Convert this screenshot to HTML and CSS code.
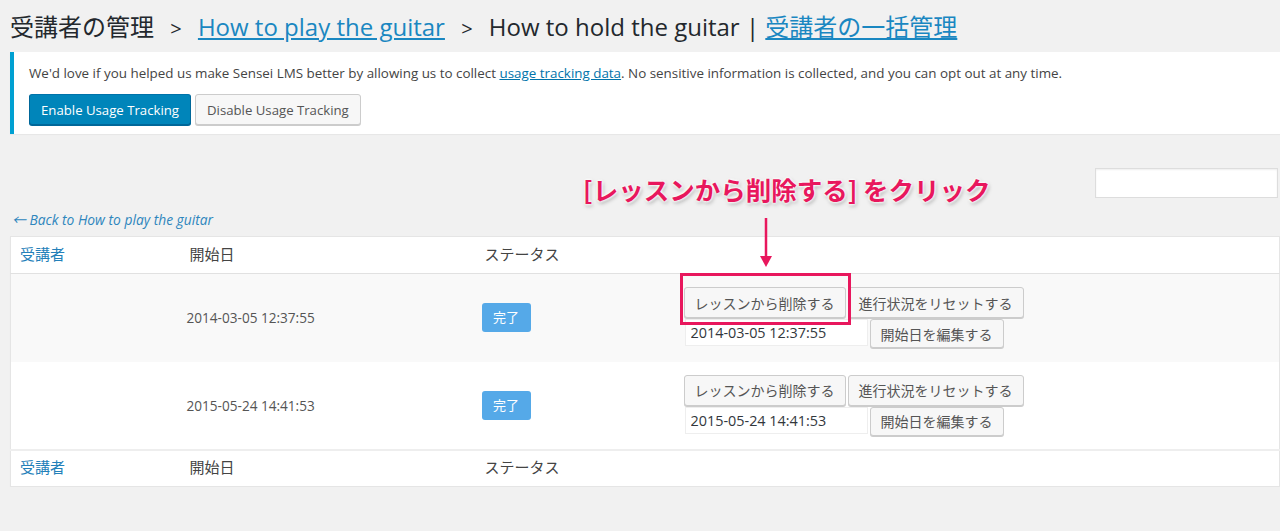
FILE: index.html
```html
<!DOCTYPE html>
<html lang="ja">
<head>
    <meta charset="UTF-8">
    <title>受講者の管理</title>
    <link rel="stylesheet" href="styles.css">
</head>
<body>
    <div class="wrap">
        <h1 class="page-title">
            受講者の管理 <span class="sep">&gt;</span>
            <a href="#">How to play the guitar</a> <span class="sep">&gt;</span>
            How to hold the guitar | <a href="#">受講者の一括管理</a>
        </h1>

        <!-- Usage tracking notice -->
        <div class="notice">
            <p>We'd love if you helped us make Sensei LMS better by allowing us to collect <a href="#">usage tracking data</a>. No sensitive information is collected, and you can opt out at any time.</p>
            <div class="notice-actions">
                <button class="button button-primary">Enable Usage Tracking</button>
                <button class="button">Disable Usage Tracking</button>
            </div>
        </div>

        <div class="search-row">
            <input type="search" class="search-input">
        </div>

        <a href="#" class="back-link">&larr; Back to How to play the guitar</a>

        <table class="learners">
            <thead>
                <tr>
                    <th class="col-learner"><a href="#">受講者</a></th>
                    <th class="col-date">開始日</th>
                    <th class="col-status">ステータス</th>
                    <th class="col-actions"></th>
                </tr>
            </thead>
            <tbody>
                <tr class="alt">
                    <td></td>
                    <td class="date">2014-03-05 12:37:55</td>
                    <td><span class="badge">完了</span></td>
                    <td>
                        <div class="actions">
                            <button class="button">レッスンから削除する</button>
                            <button class="button">進行状況をリセットする</button>
                        </div>
                        <div class="actions">
                            <input type="text" class="date-input" value="2014-03-05 12:37:55">
                            <button class="button">開始日を編集する</button>
                        </div>
                    </td>
                </tr>
                <tr>
                    <td></td>
                    <td class="date">2015-05-24 14:41:53</td>
                    <td><span class="badge">完了</span></td>
                    <td>
                        <div class="actions">
                            <button class="button">レッスンから削除する</button>
                            <button class="button">進行状況をリセットする</button>
                        </div>
                        <div class="actions">
                            <input type="text" class="date-input" value="2015-05-24 14:41:53">
                            <button class="button">開始日を編集する</button>
                        </div>
                    </td>
                </tr>
            </tbody>
            <tfoot>
                <tr>
                    <th class="col-learner"><a href="#">受講者</a></th>
                    <th class="col-date">開始日</th>
                    <th class="col-status">ステータス</th>
                    <th class="col-actions"></th>
                </tr>
            </tfoot>
        </table>
    </div>

    <!-- Annotation overlay -->
    <div class="callout">[レッスンから削除する] をクリック</div>
    <svg class="callout-arrow" width="16" height="50" viewBox="0 0 16 50">
        <line x1="8" y1="0" x2="8" y2="40" stroke="#e8175d" stroke-width="2.5"/>
        <polygon points="2,38 14,38 8,49" fill="#e8175d"/>
    </svg>
    <div class="callout-box"></div>
</body>
</html>
```

FILE: styles.css
```css
* {
    box-sizing: border-box;
}

body {
    margin: 0;
    background-color: #f1f1f1;
    color: #444;
    font-family: "Open Sans", "Noto Sans CJK JP", sans-serif;
    font-size: 13px;
}

a {
    color: #0073aa;
}

.wrap {
    padding-left: 10px;
}

/* Title */
.page-title {
    margin: 0 0 9px;
    padding-top: 12px;
    height: 43px;
    overflow: hidden;
    font-size: 24px;
    font-weight: 400;
    line-height: 30px;
    color: #23282d;
    white-space: nowrap;
}

.page-title a {
    color: #1a87c1;
}

.page-title .sep {
    font-size: 20px;
    margin: 0 10px;
}

/* Notice */
.notice {
    background-color: #fff;
    border-left: 4px solid #00a0d2;
    box-shadow: 0 1px 1px rgba(0, 0, 0, 0.04);
    padding: 11px 15px 9px;
    height: 82px;
}

.notice p {
    margin: 0;
    font-size: 13.4px;
    line-height: 20px;
    color: #444;
}

.notice-actions {
    margin-top: 11px;
    display: flex;
    gap: 4px;
}

.button {
    font-family: inherit;
    font-size: 13px;
    height: 31px;
    padding: 0 11px;
    border: 1px solid #ccc;
    border-radius: 3px;
    background-color: #f7f7f7;
    box-shadow: 0 1px 0 #ccc;
    color: #555;
    cursor: pointer;
}

.notice .button {
    font-size: 13.2px;
}

.button-primary {
    background-color: #0085ba;
    border-color: #0073aa #006799 #006799;
    box-shadow: 0 1px 0 #006799;
    color: #fff;
}

/* Search */
.search-row {
    display: flex;
    justify-content: flex-end;
    margin-top: 34px;
}

.search-input {
    width: 183px;
    height: 30px;
    margin-right: 2px;
    border: 1px solid #ddd;
    box-shadow: inset 0 1px 2px rgba(0, 0, 0, 0.07);
    background-color: #fff;
}

.back-link {
    display: block;
    margin-top: 12px;
    padding-left: 2px;
    line-height: 20px;
    font-size: 13.8px;
    font-style: italic;
    text-decoration: none;
    color: #2e86bd;
}

/* Learners table */
.learners {
    margin-top: 6px;
    width: 100%;
    border-collapse: collapse;
    background-color: #fff;
    border: 1px solid #e5e5e5;
    box-shadow: 0 1px 1px rgba(0, 0, 0, 0.04);
}

.learners th {
    text-align: left;
    font-weight: 400;
    font-size: 15px;
    line-height: 20px;
    color: #444;
    height: 37px;
    padding: 0 9px 3px;
}

.learners th a {
    text-decoration: none;
    color: #2380b9;
}

.learners thead tr {
    border-bottom: 1px solid #e1e1e1;
}

.learners tfoot tr {
    border-top: 2px solid #eee;
}

.col-learner {
    width: 170px;
}

.col-date {
    width: 295px;
}

.col-status {
    width: 199px;
}

.learners td {
    height: 88px;
    padding: 0 9px;
    vertical-align: middle;
}

.learners tr.alt td {
    background-color: #f9f9f9;
}

.learners td.date {
    color: #555;
    font-size: 13.6px;
    padding-left: 6px;
}

.badge {
    display: inline-block;
    margin-left: -3px;
    width: 49px;
    line-height: 29px;
    text-align: center;
    background-color: #55a9e8;
    color: #fff;
    border-radius: 3px;
    font-size: 13px;
}

.actions {
    display: flex;
    align-items: flex-start;
    gap: 2px;
}

.actions .button {
    font-size: 14px;
    padding: 0 10px;
    height: 31px;
}

.actions + .actions {
    margin-top: 1px;
}

.actions + .actions .button {
    height: 29px;
}

.date-input {
    width: 183px;
    height: 27px;
    margin-left: 1px;
    padding: 0 5px;
    border: 1px solid #eee;
    background-color: #fff;
    font-family: inherit;
    font-size: 14.4px;
    color: #32373c;
}

/* Annotation */
.callout {
    position: absolute;
    left: 583px;
    top: 171px;
    font-family: "Noto Sans CJK JP", sans-serif;
    font-size: 25.5px;
    font-weight: 700;
    line-height: 36px;
    color: #e8175d;
    white-space: nowrap;
    text-shadow: 0 0 3px #fff, 0 0 3px #fff, 0 0 3px #fff, 1px 2px 4px rgba(0, 0, 0, 0.35);
}

.callout-arrow {
    position: absolute;
    left: 758px;
    top: 218px;
}

.callout-box {
    position: absolute;
    left: 680px;
    top: 273px;
    width: 171px;
    height: 52px;
    border: 3px solid #e8175d;
}
```
